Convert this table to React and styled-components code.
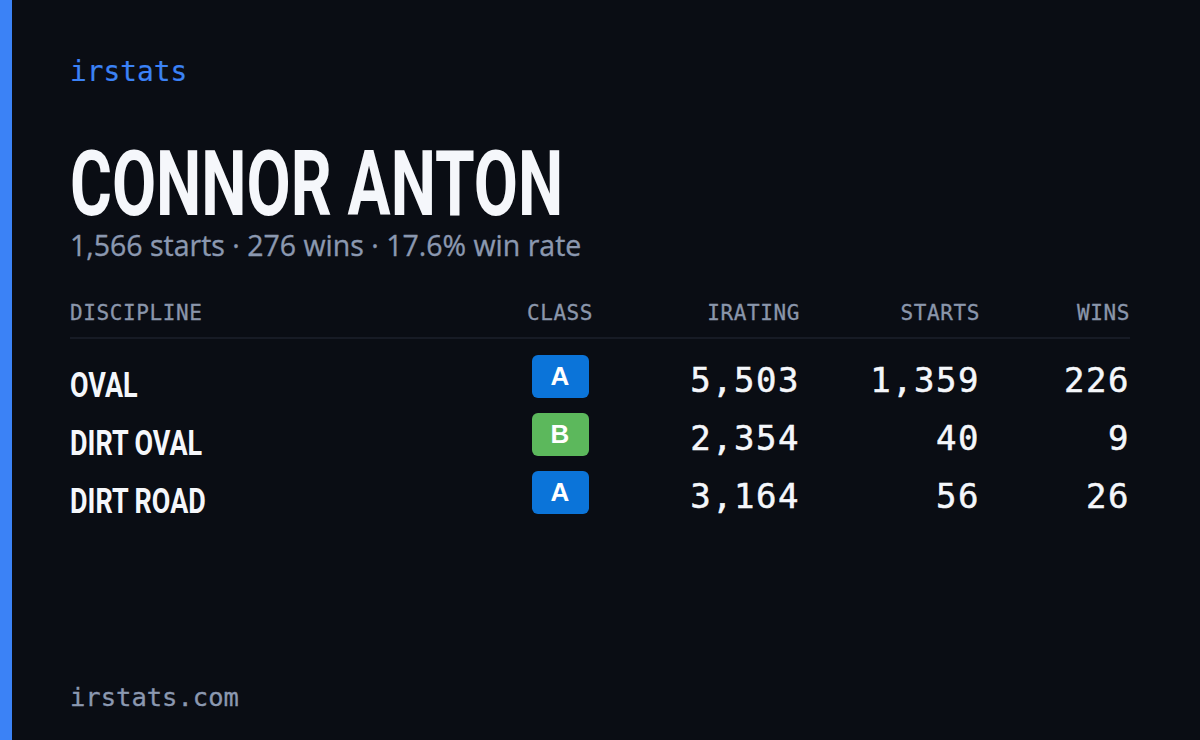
import React from "react";
import styled, { createGlobalStyle } from "styled-components";

const Global = createGlobalStyle`
  html, body { margin: 0; padding: 0; background: #0a0d14; }
  body { width: 1200px; height: 740px; overflow: hidden; }
`;

const Card = styled.div`
  width: 1200px;
  height: 740px;
  box-sizing: border-box;
  background: #0a0d14;
  border-left: 12px solid #3b82f6;
  padding: 54px 70px 0 58px;
  display: flex;
  flex-direction: column;
`;

const Brand = styled.div`
  font-family: "DejaVu Sans Mono", monospace;
  font-size: 27.8px;
  line-height: 36px;
  color: #3b82f6;
  -webkit-text-stroke: 0.2px #3b82f6;
`;

/* condensed display face emulated by horizontal squeeze of Roboto Bold */
const Condensed = styled.span`
  display: inline-block;
  white-space: nowrap;
  transform: scaleX(${(p) => p.$squeeze});
  transform-origin: left center;
`;

const Name = styled.h1`
  margin: 52px 0 0;
  font-family: "Roboto", sans-serif;
  font-weight: 700;
  font-size: 91px;
  line-height: 84px;
  color: #f5f7fb;
`;

const Summary = styled.div`
  margin-top: 1px;
  font-family: "Open Sans", sans-serif;
  font-weight: 500;
  font-size: 28.5px;
  line-height: 36px;
  color: #8b98b0;
  -webkit-text-stroke: 0.35px #8b98b0;
`;

const Table = styled.div`
  margin-top: 36px;
  display: grid;
  grid-template-columns: 440px 100px 190px 180px 150px;
`;

const Head = styled.div`
  font-family: "DejaVu Sans Mono", monospace;
  font-size: 21px;
  letter-spacing: 0.6px;
  line-height: 28px;
  color: #8a96ab;
  -webkit-text-stroke: 0.3px #8a96ab;
  padding-bottom: 10px;
  border-bottom: 2px solid #171b25;
  text-align: ${(p) => p.$align || "left"};
`;

const Disc = styled.div`
  font-family: "Roboto", sans-serif;
  font-weight: 700;
  font-size: 35px;
  color: #f5f7fb;
  height: 58px;
  box-sizing: border-box;
  display: flex;
  align-items: flex-end;
  padding-bottom: 10px;
  line-height: 1;
  margin-top: ${(p) => (p.$first ? "16px" : "0")};
`;

const ClassCell = styled.div`
  height: 58px;
  display: flex;
  justify-content: center;
  align-items: flex-start;
  margin-top: ${(p) => (p.$first ? "16px" : "0")};
`;

const Badge = styled.div`
  width: 57px;
  height: 43px;
  border-radius: 6px;
  background: ${(p) => (p.$cls === "A" ? "#0b74d9" : "#5cb85c")};
  color: #ffffff;
  font-family: "Liberation Sans", sans-serif;
  font-weight: 700;
  font-size: 26px;
  display: flex;
  align-items: center;
  justify-content: center;
`;

const Num = styled.div`
  font-family: "DejaVu Sans Mono", monospace;
  font-size: 34px;
  letter-spacing: 1.5px;
  color: #f5f7fb;
  -webkit-text-stroke: 0.5px #f5f7fb;
  text-align: right;
  height: 58px;
  line-height: 50px;
  margin-top: ${(p) => (p.$first ? "16px" : "0")};
`;

const Footer = styled.div`
  margin-top: auto;
  margin-bottom: 26px;
  font-family: "DejaVu Sans Mono", monospace;
  font-size: 25.5px;
  line-height: 34px;
  color: #8b98b0;
  -webkit-text-stroke: 0.3px #8b98b0;
`;

const rows = [
  { name: "OVAL", cls: "A", ir: "5,503", starts: "1,359", wins: "226" },
  { name: "DIRT OVAL", cls: "B", ir: "2,354", starts: "40", wins: "9" },
  { name: "DIRT ROAD", cls: "A", ir: "3,164", starts: "56", wins: "26" },
];

export default function App() {
  return (
    <>
      <Global />
      <Card>
        <Brand>irstats</Brand>
        <Name>
          <Condensed $squeeze={0.704}>CONNOR ANTON</Condensed>
        </Name>
        <Summary>1,566 starts · 276 wins · 17.6% win rate</Summary>
        <Table>
          <Head>DISCIPLINE</Head>
          <Head $align="center">CLASS</Head>
          <Head $align="right">IRATING</Head>
          <Head $align="right">STARTS</Head>
          <Head $align="right">WINS</Head>
          {rows.map((r, i) => (
            <React.Fragment key={r.name}>
              <Disc $first={i === 0}>
                <Condensed $squeeze={0.77}>{r.name}</Condensed>
              </Disc>
              <ClassCell $first={i === 0}>
                <Badge $cls={r.cls}>{r.cls}</Badge>
              </ClassCell>
              <Num $first={i === 0}>{r.ir}</Num>
              <Num $first={i === 0}>{r.starts}</Num>
              <Num $first={i === 0}>{r.wins}</Num>
            </React.Fragment>
          ))}
        </Table>
        <Footer>irstats.com</Footer>
      </Card>
    </>
  );
}
